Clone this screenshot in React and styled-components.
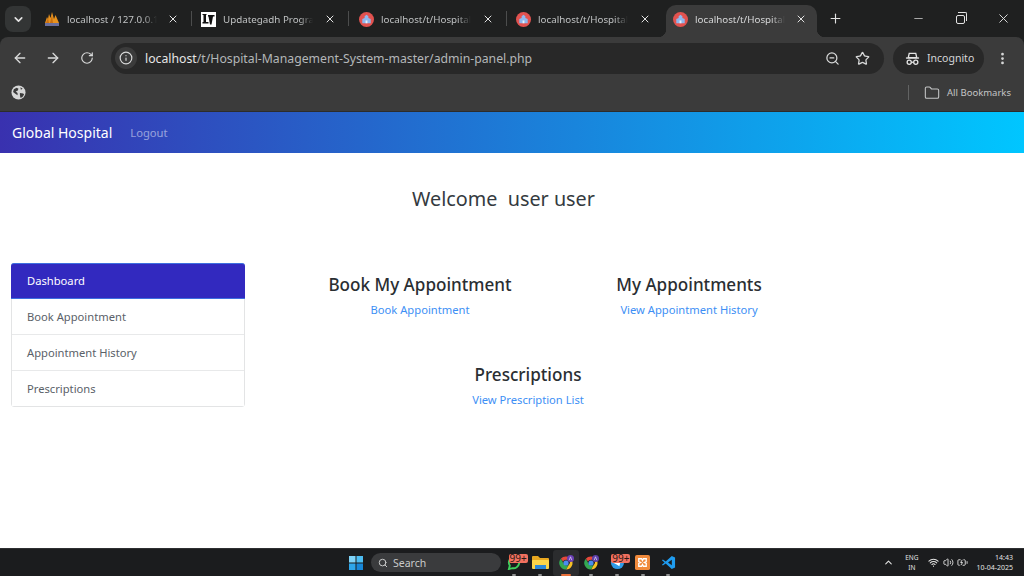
import React from "react";
import styled, { createGlobalStyle } from "styled-components";
import {
  ArrowLeft, ArrowRight, RotateCw, Info, ZoomOut, Star, MoreVertical, ChevronDown, ChevronUp,
  X, Plus, Minus, Folder, Search, Wifi, Volume2, BatteryCharging,
} from "lucide-react";

const GlobalStyle = createGlobalStyle`
  html, body { margin: 0; padding: 0; background: #fff; }
  body { font-family: "Noto Sans", "Open Sans", sans-serif; width: 1024px; height: 576px; overflow: hidden; }
  * { box-sizing: border-box; }
`;

const Screen = styled.div`
  width: 1024px;
  height: 576px;
  display: flex;
  flex-direction: column;
  background: #1f2020;
`;

const TabStrip = styled.div`
  height: 37px;
  background: #1f2020;
  display: flex;
  align-items: flex-start;
  padding: 5px 0 0 5px;
  flex-shrink: 0;
`;

const TabListButton = styled.div`
  width: 26px;
  height: 26px;
  border-radius: 8px;
  background: #333535;
  color: #e3e3e3;
  display: flex;
  align-items: center;
  justify-content: center;
  margin: 1px 7px 0 0;
`;

const Tab = styled.div`
  width: ${(p) => p.$width}px;
  height: 32px;
  display: flex;
  align-items: center;
  position: relative;
  padding: 0 0 4px ${(p) => p.$pad}px;
  color: #bfc1c2;
  ${(p) => p.$active && `
    background: #3b3b3b;
    border-radius: 10px 10px 0 0;
    color: #d6d7d8;
    &::before, &::after {
      content: "";
      position: absolute;
      bottom: 0;
      width: 8px;
      height: 8px;
    }
    &::before {
      left: -8px;
      background: radial-gradient(circle at 0 0, transparent 8px, #3b3b3b 8.5px);
    }
    &::after {
      right: -8px;
      background: radial-gradient(circle at 100% 0, transparent 8px, #3b3b3b 8.5px);
    }
  `}
`;

const TabTitle = styled.span`
  font-size: 9.8px;
  width: 90px;
  margin-left: 7px;
  white-space: nowrap;
  overflow: hidden;
  -webkit-mask-image: linear-gradient(90deg, #000 85%, transparent);
  mask-image: linear-gradient(90deg, #000 85%, transparent);
`;

const TabClose = styled.span`
  display: flex;
  margin-left: ${(p) => p.$gap}px;
  color: #e3e3e3;
`;

const TabDivider = styled.span`
  width: 1.5px;
  height: 15px;
  background: #4c4d4d;
  position: absolute;
  right: 0;
  top: 6px;
`;

const NewTab = styled.div`
  color: #e3e3e3;
  display: flex;
  margin: 6px 0 0 11px;
`;

const WindowControls = styled.div`
  margin-left: auto;
  display: flex;
  align-items: center;
  gap: 31px;
  padding: 6px 13px 0 0;
  color: #e3e3e3;
`;

const RestoreIcon = styled.span`
  display: block;
  width: 9px;
  height: 9px;
  border: 1.2px solid #e3e3e3;
  border-radius: 2px;
  position: relative;
  margin-top: 2px;
  &::after {
    content: "";
    position: absolute;
    left: 1px;
    top: -4px;
    width: 8px;
    height: 8px;
    border-top: 1.2px solid #e3e3e3;
    border-right: 1.2px solid #e3e3e3;
    border-radius: 0 2px 0 0;
  }
`;

const Toolbar = styled.div`
  height: 42px;
  background: #3b3b3b;
  border-radius: 8px 8px 0 0;
  display: flex;
  align-items: center;
  padding: 0 0 0 12px;
  color: #d9dada;
  flex-shrink: 0;
`;

const NavIcon = styled.span`
  display: flex;
  width: ${(p) => p.$w}px;
`;

const Omnibox = styled.div`
  width: 773px;
  height: 31px;
  background: #282828;
  border-radius: 16px;
  display: flex;
  align-items: center;
  margin-left: 1px;
  padding-left: 4px;
`;

const SiteInfo = styled.span`
  width: 22px;
  height: 22px;
  border-radius: 50%;
  background: #3b3b3b;
  display: flex;
  align-items: center;
  justify-content: center;
  flex-shrink: 0;
`;

const Url = styled.span`
  font-size: 12.25px;
  margin-left: 8px;
  color: #b4b7b9;
  white-space: nowrap;
  b { font-weight: 400; color: #e6e6e6; }
`;

const OmniActions = styled.span`
  margin-left: auto;
  display: flex;
  gap: 15px;
  padding-right: 14px;
`;

const Incognito = styled.div`
  width: 91px;
  height: 31px;
  background: #282828;
  border-radius: 16px;
  margin-left: 9px;
  display: flex;
  align-items: center;
  gap: 7px;
  padding-left: 12px;
  font-size: 10.5px;
  color: #d6d7d8;
`;

const MenuDots = styled.span`
  display: flex;
  margin-left: 11px;
`;

const BookmarksBar = styled.div`
  height: 33px;
  background: #3b3b3b;
  border-bottom: 1px solid #2c2c2c;
  display: flex;
  align-items: center;
  padding: 0 13px 5px 11px;
  color: #cfd0d0;
  flex-shrink: 0;
`;

const BarDivider = styled.span`
  width: 1px;
  height: 15px;
  background: #626363;
  margin-left: auto;
`;

const BookmarkFolder = styled.span`
  display: flex;
  align-items: center;
  gap: 7px;
  margin-left: 15px;
  font-size: 9.5px;
  color: #c4c5c6;
`;

const Navbar = styled.nav`
  height: 41px;
  background: linear-gradient(to right, #3931af, #00c6ff);
  display: flex;
  align-items: center;
  padding: 0 12px;
  flex-shrink: 0;
`;

const Brand = styled.a`
  font-size: 14px;
  color: #fff;
`;

const NavLink = styled.a`
  font-size: 11.2px;
  color: rgba(255, 255, 255, 0.5);
  margin-left: 18px;
`;

const Page = styled.main`
  flex: 1;
  background: #fff;
  min-height: 0;
`;

const Welcome = styled.h4`
  margin: 0;
  padding-top: 32px;
  text-align: center;
  font-size: 19.8px;
  font-weight: 400;
  line-height: 27px;
  color: #343a40;
  width: 1007px;
  white-space: pre;
`;

const Columns = styled.div`
  display: flex;
  align-items: flex-start;
  padding: 51px 0 0 11px;
`;

const SideList = styled.ul`
  width: 234px;
  margin: 0;
  padding: 0;
  list-style: none;
  border: 1px solid #e3e4e5;
  border-radius: 3px;
  flex-shrink: 0;
`;

const SideItem = styled.li`
  height: ${(p) => (p.$last ? 35 : 36)}px;
  display: flex;
  align-items: center;
  padding: ${(p) => (p.$active ? "0 0 2px 16px" : "0 0 0 15px")};
  font-size: 11.2px;
  color: ${(p) => (p.$active ? "#fff" : "#5a6168")};
  background: ${(p) => (p.$active ? "#3229bf" : "#fff")};
  margin: ${(p) => (p.$active ? "-1px -1px 0" : "0")};
  border-radius: ${(p) => (p.$active ? "3px 3px 0 0" : "0")};
  border-top: ${(p) => (p.$active ? "1px solid #3d6fe0" : "none")};
  border-bottom: ${(p) => (p.$active ? "1px solid #3d6fe0" : p.$last ? "none" : "1px solid #e8e9ea")};
`;

const Cards = styled.div`
  padding: 10px 0 0 40.5px;
`;

const CardRow = styled.div`
  display: flex;
  padding-left: ${(p) => p.$indent || 0}px;
  margin-top: ${(p) => p.$top || 0}px;
`;

const Card = styled.div`
  width: 269px;
  text-align: center;
`;

const CardTitle = styled.h4`
  margin: 0;
  font-size: 17.1px;
  font-weight: 500;
  line-height: 24px;
  color: #2a2e32;
`;

const CardLink = styled.a`
  display: block;
  font-size: 11.2px;
  line-height: 17px;
  margin-top: 4px;
  color: #3d8ff5;
`;

const Taskbar = styled.footer`
  height: 28px;
  background: #1b1c1e;
  border-top: 1px solid #2e2f31;
  display: flex;
  align-items: center;
  position: relative;
  padding-left: 349px;
  flex-shrink: 0;
`;

const SearchPill = styled.div`
  width: 130px;
  height: 19px;
  border-radius: 10px;
  background: #3a3b3d;
  margin-left: 8px;
  display: flex;
  align-items: center;
  gap: 5px;
  padding-left: 7px;
  font-size: 10.5px;
  color: #c9caca;
`;

const TaskIcons = styled.div`
  display: flex;
  align-items: center;
  margin-left: 0.5px;
`;

const TaskSlot = styled.div`
  width: 25.7px;
  height: 26px;
  display: flex;
  align-items: center;
  justify-content: center;
  position: relative;
  border-radius: 3px;
  background: ${(p) => (p.$current ? "#2b2c2e" : "transparent")};
  &::after {
    content: "";
    position: absolute;
    bottom: 0;
    left: 50%;
    transform: translateX(-50%);
    width: ${(p) => (p.$current ? 10 : 4)}px;
    height: 2px;
    border-radius: 1px;
    background: ${(p) => (p.$current ? "#e8703a" : "#8f9091")};
  }
`;

const Badge = styled.span`
  position: absolute;
  top: 4px;
  left: 7px;
  width: 19px;
  height: 9px;
  border-radius: 2px;
  background: #f2705f;
  color: #2a1a18;
  font-size: 10px;
  line-height: 9px;
  padding-left: 1px;
  overflow: hidden;
  white-space: nowrap;
`;

const Tray = styled.div`
  margin-left: auto;
  display: flex;
  align-items: center;
  color: #e3e3e3;
  padding-right: 11px;
`;

const Lang = styled.span`
  font-size: 6.5px;
  line-height: 10px;
  text-align: center;
  margin-left: 11px;
`;

const TrayIcons = styled.span`
  display: flex;
  gap: 3.5px;
  margin-left: 10px;
`;

const Clock = styled.span`
  font-size: 7px;
  line-height: 10px;
  text-align: right;
  margin-left: 8px;
`;

function HospitalIcon() {
  return (
    <svg width="15" height="15" viewBox="0 0 16 16">
      <circle cx="8" cy="8" r="8" fill="#e2524f" />
      <path d="M3.5 12V7.5L6 6.5V4.5L8 3l2 1.5v2l2.5 1V12z" fill="#8fb8ee" />
      <rect x="7" y="9" width="2" height="3" fill="#e9f1fb" />
    </svg>
  );
}

function PmaIcon() {
  return (
    <svg width="16" height="16" viewBox="0 0 16 16">
      <path d="M1 12 3 6l1 2 1-5 1.5 4L8 1l2 7 1.5-4L15 12z" fill="#e8921e" />
      <path d="M6 12 8 4l1 8zM2 12l2-5 1 5z" fill="#c96f10" />
      <rect x="1" y="12" width="14" height="3" fill="#6a6f9c" />
    </svg>
  );
}

function UgIcon() {
  return (
    <svg width="15" height="15" viewBox="0 0 15 15">
      <rect width="15" height="15" fill="#fff" />
      <path d="M1.5 2h4v1H5v7h2.5v1.5h-6V10h1V3h-1z" fill="#111" />
      <path d="M7 3h6.5v1.5H12l-1.5 8H9l-1.5-8H7z" fill="#111" />
    </svg>
  );
}

function GlobeIcon() {
  return (
    <svg width="15" height="15" viewBox="0 0 16 16">
      <circle cx="8" cy="8" r="7.5" fill="#d6d7d7" />
      <path d="M3 4.5 6 3l2 1-1 2-2 1 2 1.5V11L5 9.5 2.2 7.5zM9.5 8.5l3.5.5 1 1-2 3-2 .5-.5-3zM10 2.5l2.5 1.5-2 1z" fill="#3b3b3b" />
    </svg>
  );
}

function IncognitoIcon() {
  return (
    <svg width="15" height="15" viewBox="0 0 16 16" fill="none" stroke="#e3e3e3" strokeWidth="1.4">
      <path d="M4.5 2.5h7l1 4.5h-9z" />
      <path d="M1 7.5h14" />
      <circle cx="4.5" cy="12" r="2.2" />
      <circle cx="11.5" cy="12" r="2.2" />
      <path d="M6.7 12h2.6" />
    </svg>
  );
}

function WinLogo() {
  return (
    <svg width="14" height="14" viewBox="0 0 14 14">
      <rect width="6.5" height="6.5" fill="#7fd3f7" />
      <rect x="7.5" width="6.5" height="6.5" fill="#4dbdf2" />
      <rect y="7.5" width="6.5" height="6.5" fill="#2ea6ea" />
      <rect x="7.5" y="7.5" width="6.5" height="6.5" fill="#1787d8" />
    </svg>
  );
}

function ChromeIcon({ badge }) {
  return (
    <svg width="16" height="16" viewBox="0 0 16 16">
      <path d="M8 1.5a6.5 6.5 0 0 1 5.6 3.2H8a3.3 3.3 0 0 0-3 1.9L2.8 3.8A6.5 6.5 0 0 1 8 1.5z" fill="#e5483b" />
      <path d="M13.6 4.7A6.5 6.5 0 0 1 8 14.5l2.8-4.8a3.3 3.3 0 0 0 .1-5z" fill="#f6c026" />
      <path d="M2.8 3.8 5.6 8.7a3.3 3.3 0 0 0 5.2 1L8 14.5A6.5 6.5 0 0 1 2.8 3.8z" fill="#34a853" />
      <circle cx="8" cy="8" r="2.6" fill="#4a8ef0" />
      <circle cx="12.5" cy="3.5" r="3.5" fill={badge} />
      <path d="M11.2 5.2l1.3-3.4 1.3 3.4" stroke="#e8def8" strokeWidth=".7" fill="none" />
    </svg>
  );
}

const tabs = [
  { width: 154, pad: 6, icon: <PmaIcon />, title: "localhost / 127.0.0.1", gap: 10, divider: true },
  { width: 157, pad: 9, icon: <UgIcon />, title: "Updategadh Program", gap: 11, divider: true },
  { width: 158, pad: 10, icon: <HospitalIcon />, title: "localhost/t/Hospital-", gap: 11, divider: true },
  { width: 159, pad: 9, icon: <HospitalIcon />, title: "localhost/t/Hospital-", gap: 11 },
];

export default function App() {
  return (
    <Screen>
      <GlobalStyle />
      <TabStrip>
        <TabListButton><ChevronDown size={13} strokeWidth={3} /></TabListButton>
        {tabs.map((t, i) => (
          <Tab key={i} $width={t.width} $pad={t.pad}>
            {t.icon}
            <TabTitle>{t.title}</TabTitle>
            <TabClose $gap={t.gap}><X size={12} strokeWidth={2} /></TabClose>
            {t.divider && <TabDivider />}
          </Tab>
        ))}
        <Tab $active $width={151} $pad={7}>
          <HospitalIcon />
          <TabTitle>localhost/t/Hospital-</TabTitle>
          <TabClose $gap={10}><X size={12} strokeWidth={2} /></TabClose>
        </Tab>
        <NewTab><Plus size={15} strokeWidth={1.8} /></NewTab>
        <WindowControls>
          <Minus size={13} strokeWidth={1.3} />
          <RestoreIcon />
          <X size={15} strokeWidth={1.5} />
        </WindowControls>
      </TabStrip>

      <Toolbar>
        <NavIcon $w={33}><ArrowLeft size={16} /></NavIcon>
        <NavIcon $w={35}><ArrowRight size={16} /></NavIcon>
        <NavIcon $w={30}><RotateCw size={14} /></NavIcon>
        <Omnibox>
          <SiteInfo><Info size={14} /></SiteInfo>
          <Url><b>localhost</b>/t/Hospital-Management-System-master/admin-panel.php</Url>
          <OmniActions>
            <ZoomOut size={15} />
            <Star size={15} />
          </OmniActions>
        </Omnibox>
        <Incognito><IncognitoIcon />Incognito</Incognito>
        <MenuDots><MoreVertical size={15} strokeWidth={2.4} /></MenuDots>
      </Toolbar>

      <BookmarksBar>
        <GlobeIcon />
        <BarDivider />
        <BookmarkFolder><Folder size={16} strokeWidth={1.6} />All Bookmarks</BookmarkFolder>
      </BookmarksBar>

      <Navbar>
        <Brand>Global Hospital</Brand>
        <NavLink>Logout</NavLink>
      </Navbar>

      <Page>
        <Welcome>Welcome  user user</Welcome>
        <Columns>
          <SideList>
            <SideItem $active>Dashboard</SideItem>
            <SideItem>Book Appointment</SideItem>
            <SideItem>Appointment History</SideItem>
            <SideItem $last>Prescriptions</SideItem>
          </SideList>
          <Cards>
            <CardRow>
              <Card>
                <CardTitle>Book My Appointment</CardTitle>
                <CardLink>Book Appointment</CardLink>
              </Card>
              <Card>
                <CardTitle>My Appointments</CardTitle>
                <CardLink>View Appointment History</CardLink>
              </Card>
            </CardRow>
            <CardRow $indent={108} $top={45}>
              <Card>
                <CardTitle>Prescriptions</CardTitle>
                <CardLink>View Prescription List</CardLink>
              </Card>
            </CardRow>
          </Cards>
        </Columns>
      </Page>

      <Taskbar>
        <WinLogo />
        <SearchPill><Search size={10} strokeWidth={2.4} />Search</SearchPill>
        <TaskIcons>
          <TaskSlot>
            <svg width="15" height="15" viewBox="0 0 16 16">
              <path d="M8 2a6 6 0 0 0-5 9.3L2 15l3.8-1A6 6 0 1 0 8 2z" fill="none" stroke="#3ecf5c" strokeWidth="2" />
            </svg>
            <Badge>99+</Badge>
          </TaskSlot>
          <TaskSlot>
            <svg width="17" height="15" viewBox="0 0 17 15">
              <path d="M0 2a1 1 0 0 1 1-1h5l2 2h8a1 1 0 0 1 1 1v2H0z" fill="#e9a820" />
              <rect y="5" width="17" height="9" rx="1" fill="#fbd449" />
              <rect x="3" y="10" width="11" height="4" fill="#2b87d8" />
            </svg>
          </TaskSlot>
          <TaskSlot $current><ChromeIcon badge="#6a3fb5" /></TaskSlot>
          <TaskSlot><ChromeIcon badge="#5a3ea8" /></TaskSlot>
          <TaskSlot>
            <svg width="15" height="15" viewBox="0 0 16 16">
              <circle cx="8" cy="8" r="7" fill="#2f9be8" />
              <path d="M3 8l9-4-2 8-3-2z" fill="#fff" />
            </svg>
            <Badge>99+</Badge>
          </TaskSlot>
          <TaskSlot>
            <svg width="15" height="15" viewBox="0 0 16 16">
              <rect width="16" height="16" rx="2" fill="#f08a3c" />
              <path d="M4 4h3l1 2 1-2h3v3l-2 1 2 1v3H9L8 10l-1 2H4V9l2-1-2-1z" fill="none" stroke="#fff" strokeWidth="1.4" />
            </svg>
          </TaskSlot>
          <TaskSlot>
            <svg width="15" height="15" viewBox="0 0 16 16">
              <path d="M11.5 1 15 2.7v10.6L11.5 15 5 9l-3 2.3L1 10.5 3.8 8 1 5.5 2 4.7 5 7z" fill="#1f9cf0" />
              <path d="M11.5 5 7.5 8l4 3z" fill="#1b1c1e" />
            </svg>
          </TaskSlot>
        </TaskIcons>
        <Tray>
          <ChevronUp size={11} strokeWidth={2.4} />
          <Lang>ENG<br />IN</Lang>
          <TrayIcons>
            <Wifi size={11} strokeWidth={2.4} />
            <Volume2 size={11} strokeWidth={2} />
            <BatteryCharging size={11} strokeWidth={2} />
          </TrayIcons>
          <Clock>14:43<br />10-04-2025</Clock>
        </Tray>
      </Taskbar>
    </Screen>
  );
}
